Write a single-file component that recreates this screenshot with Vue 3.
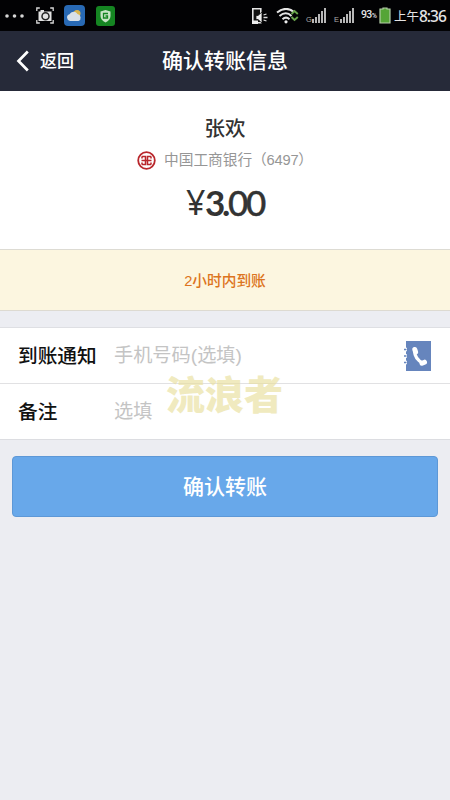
<script setup>
const fields = [
  { label: '到账通知', hint: '手机号码(选填)', contacts: true },
  { label: '备注', hint: '选填', contacts: false }
]
const signals = ['G', 'E']
</script>

<template>
  <div class="screen">
    <div class="status">
      <svg class="dots" width="20" height="6" viewBox="0 0 20 6"><circle cx="2" cy="3" r="1.8" /><circle cx="9.5" cy="3" r="1.8" /><circle cx="17" cy="3" r="1.8" /></svg>
      <svg class="camera" width="18" height="17" viewBox="0 0 18 17">
        <path d="M.8 4V1h3M14.2 1h3v3M17.2 13v3h-3M3.800 16h-3v-3" fill="none" stroke="#d8d8d8" stroke-width="1.3" />
        <path d="M2.500 4.500h2V3H8v1.500h7.500V14h-13z" fill="#e2e2e2" />
        <circle cx="9.500" cy="9.200" r="3.500" fill="#e2e2e2" stroke="#222" stroke-width="1.500" />
      </svg>
      <svg class="weather" width="21" height="21" viewBox="0 0 21 21">
        <rect width="21" height="21" rx="4" fill="#2869b4" />
        <circle cx="13" cy="8.500" r="3.500" fill="#d9b650" />
        <path d="M6 16a3.500 3.500 0 0 1-.5-6.800 4.500 4.500 0 0 1 8-.2 3.700 3.700 0 0 1 1 7z" fill="#d8e1e9" />
      </svg>
      <svg class="guard" width="19" height="20" viewBox="0 0 19 20">
        <rect width="19" height="20" rx="3" fill="#158522" />
        <path d="M9.500 4 14.500 5.500V10c0 3-2 5-5 6.500-3-1.500-5-3.500-5-6.500V5.500z" fill="#c7e4c7" />
        <path d="M12 7.500H7.500v4.500h4V10H9.500" fill="none" stroke="#158522" stroke-width="1.300" />
      </svg>
      <div class="spacer"></div>
      <svg class="phone" width="17" height="18" viewBox="0 0 17 18">
        <path d="M1.800 1.800h8v14h-8z" fill="#111" stroke="#e5e5e5" stroke-width="1.600" />
        <path d="M1 13.500h6V17H1z" fill="#eee" />
        <path d="M5 8.500h2L11 5v11l-4-3.500H5z" fill="#eee" stroke="#111" stroke-width=".8" />
        <path d="M12.500 8 15.500 7M12.500 10.500h4M12.500 13l3 1" stroke="#ddd" stroke-width="1.300" />
      </svg>
      <svg class="wifi" width="24" height="16" viewBox="0 0 24 16">
        <g fill="none" stroke="#e5e5e5" stroke-width="2"><path d="M1 4.500Q10-2.500 18 4" /><path d="M3.500 8Q10 2.500 15.500 8" /><path d="M6.500 11.300Q10 8 13.500 11.300" /></g>
        <circle cx="10" cy="13.800" r="1.600" fill="#eee" />
        <path d="M15.500 6 18.500 3l3.300 3M15.500 9l3 3 3.300-3" fill="none" stroke="#69a34c" stroke-width="1.900" />
      </svg>
      <div v-for="s in signals" :key="s" class="signal">
        <span>{{ s }}</span>
        <svg width="15" height="15" viewBox="0 0 15 15"><path d="M1 15v-4M4 15V9M7 15V6M10 15V3M13 15V0" stroke="#d7d7d7" stroke-width="1.700" /></svg>
      </div>
      <span class="percent">93<i>%</i></span>
      <svg class="battery" width="12" height="17" viewBox="0 0 12 17"><path d="M4 2V1h4v1h3v14H1V2z" fill="#55a536" stroke="#b5cda9" stroke-width="1.200" /></svg>
      <span class="noon">上午</span><span class="clock">8:36</span>
    </div>

    <header class="nav">
      <div class="back">
        <svg width="14" height="22" viewBox="0 0 14 22"><path d="M11.800 1.500 2.500 11l9.300 9.500" fill="none" stroke="#fff" stroke-width="2.700" /></svg>
        <span>返回</span>
      </div>
      <h1>确认转账信息</h1>
    </header>

    <section class="payee">
      <div class="name">张欢</div>
      <div class="bank">
        <svg width="19" height="19" viewBox="0 0 19 19">
          <circle cx="9.500" cy="9.500" r="8.300" fill="#fff" stroke="#b9272c" stroke-width="1.800" />
          <path d="M4.800 5.500h3.700v8H4.800M14.200 5.500h-3.700v8h3.700M4.500 9.500h10M5 7.500v-2M14 7.500v-2M5 11.500v2M14 11.500v2" fill="none" stroke="#b9272c" stroke-width="1.500" />
        </svg>
        <span class="bank-name">中国工商银行</span><span class="card">（6497）</span>
      </div>
      <div class="amount"><span class="yen">¥</span><b>3</b><span class="point">.</span><span class="cents">00</span></div>
    </section>

    <div class="notice">2小时内到账</div>

    <section class="form">
      <div v-for="f in fields" :key="f.label" class="row">
        <span class="label">{{ f.label }}</span>
        <span class="hint">{{ f.hint }}</span>
        <svg v-if="f.contacts" class="contacts" width="27" height="30" viewBox="0 0 27 30">
          <path d="M2 0h25v30H2z" fill="#6685bd" />
          <path d="M0 8.500h3M0 15h3M0 21.500h3" stroke="#fff" stroke-width="3.500" />
          <path d="M0 8.500h2.500M0 15h2.500M0 21.500h2.500" stroke="#6685bd" stroke-width="1.300" />
          <path d="M10.500 9c0 6 3.500 11 9 13.500" fill="none" stroke="#fff" stroke-width="3.200" />
          <path d="M10.800 8.500l.8 2.500M18 22.200l2.500-1" stroke="#fff" stroke-width="5" stroke-linecap="round" />
        </svg>
      </div>
      <div class="watermark">流浪者</div>
    </section>

    <button class="submit">确认转账</button>
  </div>
</template>

<style>
body { background: #ecedf2; }
</style>

<style scoped>
.screen { width: 450px; height: 800px; overflow: hidden; background: #ecedf2; font-family: "Liberation Sans", "Noto Sans CJK SC", sans-serif; }
.status { box-sizing: border-box; height: 31px; display: flex; align-items: center; padding: 0 5px 0 5px; background: #020204; color: #e4e4e4; white-space: nowrap; }
.dots { fill: #d5d5d5; margin-right: 11px; }
.camera { margin-right: 10px; }
.weather { margin-right: 11px; }
.spacer { flex: 1; }
.phone { margin-right: 8px; }
.wifi { margin-right: 6px; }
.signal { display: flex; align-items: flex-end; width: 21px; margin-right: 7px; }
.signal span { font-size: 7.5px; line-height: 6px; width: 6px; color: #aaa; }
.signal svg { flex: none; }
.percent { font: 500 10.5px/14px Roboto, sans-serif; width: 18px; letter-spacing: -.6px; margin-left: -1px; }
.percent i { display: inline-block; width: 5px; font-size: 7px; font-style: normal; }
.battery { margin-right: 3px; flex: none; }
.noon { font-size: 12.5px; width: 25px; }
.clock { font: 500 15.5px/20px "Noto Sans", sans-serif; letter-spacing: -1px; width: 26px; }
.status > svg { flex: none; }
.nav { height: 60px; display: grid; grid-template-columns: 162px 126px 162px; align-items: center; background: #262a39; color: #fff; }
.back { display: flex; align-items: center; padding-left: 16px; gap: 10px; font-size: 17px; line-height: 24px; font-weight: 500; }
.back span { margin-top: 1px; }
.nav h1 { margin: 0; font-size: 21px; line-height: 30px; font-weight: 500; white-space: nowrap; }
.payee { box-sizing: border-box; height: 159px; padding-top: 24px; display: flex; flex-direction: column; align-items: center; background: #fff; border-bottom: 1px solid #dddbd3; }
.name { font-size: 20.5px; line-height: 28px; font-weight: 500; color: #333; }
.bank { display: flex; align-items: center; align-self: stretch; padding-left: 137px; height: 20px; margin-top: 7px; font-size: 14.7px; line-height: 20px; color: #969696; white-space: nowrap; }
.bank svg { margin-right: 8px; }
.bank-name { width: 88px; }
.card { letter-spacing: -.2px; }
.amount { display: flex; align-self: stretch; padding-left: 186px; margin-top: 9px; font-family: Lato, sans-serif; font-size: 35px; line-height: 46px; letter-spacing: -2px; color: #333; }
.amount b { width: 17px; font-weight: 700; }
.point { width: 6px; font-weight: 700; }
.cents { font-weight: 500; -webkit-text-stroke: .4px #333; letter-spacing: -2.2px; }
.yen { width: 19px; font-family: "Noto Sans", sans-serif; font-size: 34px; letter-spacing: 0; }
.notice { box-sizing: border-box; height: 61px; padding-bottom: 2px; display: flex; align-items: center; justify-content: center; background: #fcf6e0; border-bottom: 1px solid #dddad1; color: #dc7420; font-size: 14.7px; font-weight: 500; }
.form { position: relative; margin-top: 16px; border-top: 1px solid #dedfe3; border-bottom: 1px solid #dcdde1; background: #fff; }
.row { box-sizing: border-box; height: 55px; display: flex; align-items: center; padding: 0 19px 0 18px; }
.row + .row { border-top: 1px solid #e1e1e3; height: 56px; }
.label { width: 96px; padding-bottom: 3px; font-size: 19.7px; font-weight: 500; color: #111; }
.hint { padding-bottom: 3px; font-size: 19.2px; color: #c4c4c4; }
.contacts { margin-left: auto; }
.watermark { position: absolute; left: 166px; top: 39px; font-size: 39px; line-height: 58px; font-weight: 900; color: #e9df9d; opacity: .65; white-space: nowrap; }
.submit { display: block; box-sizing: border-box; width: 426px; height: 61px; margin: 16px 12px 0; padding: 0 0 4px; border: 1px solid #5d98d7; border-radius: 4px; background: #68a8ea; color: #fff; font-family: inherit; font-size: 21px; font-weight: 500; }
</style>
